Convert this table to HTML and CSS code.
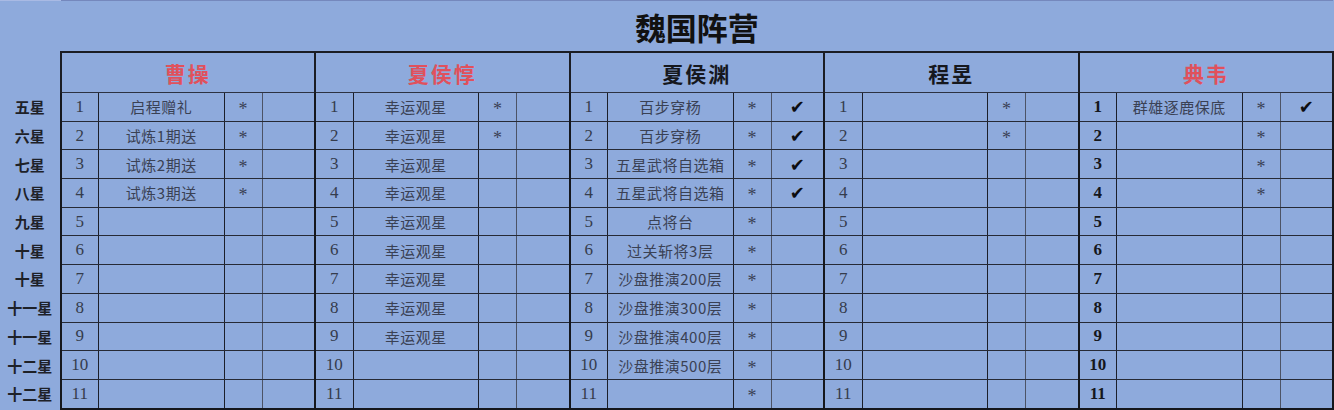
FILE: index.html
```html
<!DOCTYPE html>
<html lang="zh">
<head>
<meta charset="utf-8">
<title>魏国阵营</title>
<link rel="stylesheet" href="styles.css">
</head>
<body>
<table class="sheet">
<colgroup>
<col class="c-lbl">
<col class="c-n"><col class="c-nm"><col class="c-st"><col class="c-ck">
<col class="c-n"><col class="c-nm"><col class="c-st"><col class="c-ck">
<col class="c-n"><col class="c-nm"><col class="c-st"><col class="c-ck">
<col class="c-n"><col class="c-nm"><col class="c-st"><col class="c-ck">
<col class="c-n"><col class="c-nm"><col class="c-st"><col class="c-ck">
</colgroup>
<tr class="r-title">
<td class="corner"></td>
<td class="title" colspan="20">魏国阵营</td>
</tr>
<tr class="r-head">
<td class="lbl"></td>
<td class="gh red" colspan="4">曹操</td>
<td class="gh red" colspan="4">夏侯惇</td>
<td class="gh" colspan="4">夏侯渊</td>
<td class="gh" colspan="4">程昱</td>
<td class="gh red" colspan="4">典韦</td>
</tr>
<tr>
<td class="lbl">五星</td>
<td class="n">1</td><td class="nm">启程赠礼</td><td class="st"><span>*</span></td><td class="ck"></td>
<td class="n">1</td><td class="nm">幸运观星</td><td class="st"><span>*</span></td><td class="ck"></td>
<td class="n">1</td><td class="nm">百步穿杨</td><td class="st"><span>*</span></td><td class="ck">✔</td>
<td class="n">1</td><td class="nm"></td><td class="st"><span>*</span></td><td class="ck"></td>
<td class="n b">1</td><td class="nm">群雄逐鹿保底</td><td class="st"><span>*</span></td><td class="ck last">✔</td>
</tr>
<tr>
<td class="lbl">六星</td>
<td class="n">2</td><td class="nm">试炼1期送</td><td class="st"><span>*</span></td><td class="ck"></td>
<td class="n">2</td><td class="nm">幸运观星</td><td class="st"><span>*</span></td><td class="ck"></td>
<td class="n">2</td><td class="nm">百步穿杨</td><td class="st"><span>*</span></td><td class="ck">✔</td>
<td class="n">2</td><td class="nm"></td><td class="st"><span>*</span></td><td class="ck"></td>
<td class="n b">2</td><td class="nm"></td><td class="st"><span>*</span></td><td class="ck last"></td>
</tr>
<tr>
<td class="lbl">七星</td>
<td class="n">3</td><td class="nm">试炼2期送</td><td class="st"><span>*</span></td><td class="ck"></td>
<td class="n">3</td><td class="nm">幸运观星</td><td class="st"></td><td class="ck"></td>
<td class="n">3</td><td class="nm">五星武将自选箱</td><td class="st"><span>*</span></td><td class="ck">✔</td>
<td class="n">3</td><td class="nm"></td><td class="st"></td><td class="ck"></td>
<td class="n b">3</td><td class="nm"></td><td class="st"><span>*</span></td><td class="ck last"></td>
</tr>
<tr>
<td class="lbl">八星</td>
<td class="n">4</td><td class="nm">试炼3期送</td><td class="st"><span>*</span></td><td class="ck"></td>
<td class="n">4</td><td class="nm">幸运观星</td><td class="st"></td><td class="ck"></td>
<td class="n">4</td><td class="nm">五星武将自选箱</td><td class="st"><span>*</span></td><td class="ck">✔</td>
<td class="n">4</td><td class="nm"></td><td class="st"></td><td class="ck"></td>
<td class="n b">4</td><td class="nm"></td><td class="st"><span>*</span></td><td class="ck last"></td>
</tr>
<tr>
<td class="lbl">九星</td>
<td class="n">5</td><td class="nm"></td><td class="st"></td><td class="ck"></td>
<td class="n">5</td><td class="nm">幸运观星</td><td class="st"></td><td class="ck"></td>
<td class="n">5</td><td class="nm">点将台</td><td class="st"><span>*</span></td><td class="ck"></td>
<td class="n">5</td><td class="nm"></td><td class="st"></td><td class="ck"></td>
<td class="n b">5</td><td class="nm"></td><td class="st"></td><td class="ck last"></td>
</tr>
<tr>
<td class="lbl">十星</td>
<td class="n">6</td><td class="nm"></td><td class="st"></td><td class="ck"></td>
<td class="n">6</td><td class="nm">幸运观星</td><td class="st"></td><td class="ck"></td>
<td class="n">6</td><td class="nm">过关斩将3层</td><td class="st"><span>*</span></td><td class="ck"></td>
<td class="n">6</td><td class="nm"></td><td class="st"></td><td class="ck"></td>
<td class="n b">6</td><td class="nm"></td><td class="st"></td><td class="ck last"></td>
</tr>
<tr>
<td class="lbl">十星</td>
<td class="n">7</td><td class="nm"></td><td class="st"></td><td class="ck"></td>
<td class="n">7</td><td class="nm">幸运观星</td><td class="st"></td><td class="ck"></td>
<td class="n">7</td><td class="nm">沙盘推演200层</td><td class="st"><span>*</span></td><td class="ck"></td>
<td class="n">7</td><td class="nm"></td><td class="st"></td><td class="ck"></td>
<td class="n b">7</td><td class="nm"></td><td class="st"></td><td class="ck last"></td>
</tr>
<tr>
<td class="lbl">十一星</td>
<td class="n">8</td><td class="nm"></td><td class="st"></td><td class="ck"></td>
<td class="n">8</td><td class="nm">幸运观星</td><td class="st"></td><td class="ck"></td>
<td class="n">8</td><td class="nm">沙盘推演300层</td><td class="st"><span>*</span></td><td class="ck"></td>
<td class="n">8</td><td class="nm"></td><td class="st"></td><td class="ck"></td>
<td class="n b">8</td><td class="nm"></td><td class="st"></td><td class="ck last"></td>
</tr>
<tr>
<td class="lbl">十一星</td>
<td class="n">9</td><td class="nm"></td><td class="st"></td><td class="ck"></td>
<td class="n">9</td><td class="nm">幸运观星</td><td class="st"></td><td class="ck"></td>
<td class="n">9</td><td class="nm">沙盘推演400层</td><td class="st"><span>*</span></td><td class="ck"></td>
<td class="n">9</td><td class="nm"></td><td class="st"></td><td class="ck"></td>
<td class="n b">9</td><td class="nm"></td><td class="st"></td><td class="ck last"></td>
</tr>
<tr>
<td class="lbl">十二星</td>
<td class="n">10</td><td class="nm"></td><td class="st"></td><td class="ck"></td>
<td class="n">10</td><td class="nm"></td><td class="st"></td><td class="ck"></td>
<td class="n">10</td><td class="nm">沙盘推演500层</td><td class="st"><span>*</span></td><td class="ck"></td>
<td class="n">10</td><td class="nm"></td><td class="st"></td><td class="ck"></td>
<td class="n b">10</td><td class="nm"></td><td class="st"></td><td class="ck last"></td>
</tr>
<tr class="r-last">
<td class="lbl">十二星</td>
<td class="n">11</td><td class="nm"></td><td class="st"></td><td class="ck"></td>
<td class="n">11</td><td class="nm"></td><td class="st"></td><td class="ck"></td>
<td class="n">11</td><td class="nm"></td><td class="st"><span>*</span></td><td class="ck"></td>
<td class="n">11</td><td class="nm"></td><td class="st"></td><td class="ck"></td>
<td class="n b">11</td><td class="nm"></td><td class="st"></td><td class="ck last"></td>
</tr>
</table>
</body>
</html>
```
FILE: styles.css
```css
html, body {
  margin: 0;
  padding: 0;
  background: #8eaadc;
}
body {
  width: 1334px;
  height: 410px;
  overflow: hidden;
  font-family: "Liberation Serif", "Noto Sans CJK SC", serif;
  color: #343b4c;
}
.sheet {
  border-collapse: collapse;
  table-layout: fixed;
  width: 1334px;
}
.c-lbl { width: 60.5px; }
.c-n { width: 38px; }
.c-nm { width: 125.5px; }
.c-st { width: 38px; }
.c-ck { width: 53px; }

.sheet td {
  padding: 0;
  text-align: center;
  vertical-align: middle;
  white-space: nowrap;
  overflow: hidden;
  height: 27.7px;
}
.sheet .r-title td {
  height: 50px;
  border-top: 1px solid #7588bd;
}
.sheet .r-title td.corner {
  border-top: 1px solid #a9bae4;
}
.title {
  font-family: "Noto Sans CJK SC", serif;
  font-size: 31px;
  font-weight: 700;
  color: #111;
  line-height: 1;
}
.sheet .r-head td {
  height: 39px;
}
.gh {
  border: 2px solid #1b1d24;
  border-bottom: 1px solid #2d3242;
  font-family: "Noto Sans CJK SC", serif;
  font-size: 21px;
  font-weight: 700;
  color: #16181e;
  letter-spacing: 2px;
}
.gh.red { color: #e0515c; }

.lbl {
  font-family: "Noto Sans CJK SC", serif;
  font-weight: 700;
  font-size: 15px;
  color: #1e2128;
  border: none;
}
.n, .nm, .st, .ck {
  border-bottom: 1px solid #262a36;
  font-size: 16px;
}
.n {
  border-left: 2px solid #15171d;
  border-right: 1px solid #1c1f2a;
  color: #353c4c;
  font-size: 17px;
}
.n.b {
  font-weight: 700;
  color: #15171d;
}
.nm {
  border-right: 1px solid #1c1f2a;
  font-family: "Noto Sans CJK SC", serif;
  font-size: 15px;
  color: #3a4154;
  letter-spacing: 0.5px;
}
.st {
  border-right: 1px solid #4c5366;
  color: #3a4154;
}
.st span {
  display: inline-block;
  font-size: 18px;
  transform: translateY(3px);
}
.ck {
  border-right: 2px solid #15171d;
  font-family: "DejaVu Sans", sans-serif;
  font-size: 18px;
  font-weight: 700;
  color: #0c0d10;
}
.r-last td.n, .r-last td.nm, .r-last td.st, .r-last td.ck {
  border-bottom: 2px solid #15171d;
}
```
